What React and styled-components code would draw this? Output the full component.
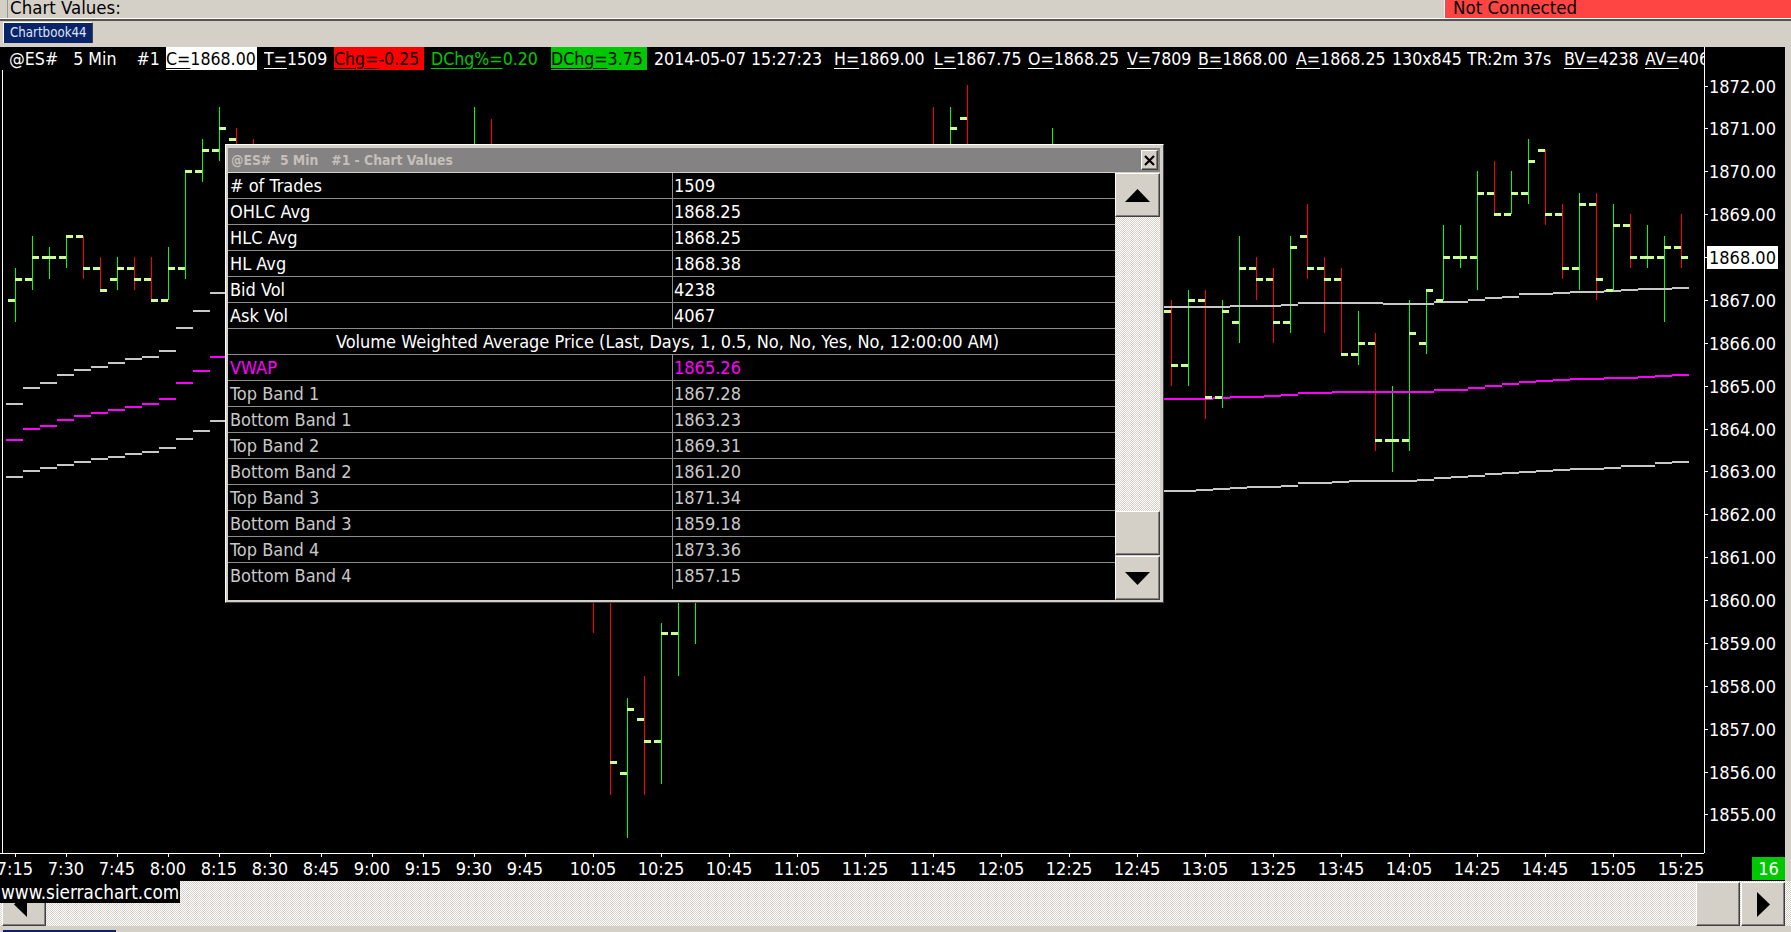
import React from 'react'
import styled, { createGlobalStyle } from 'styled-components'

const grey = '#d4d0c8'
const tickColor = '#c8ff96'

const GlobalStyle = createGlobalStyle`
  html, body { margin: 0; padding: 0; background: ${grey}; }
  body { font-family: "DejaVu Sans", "Liberation Sans", sans-serif; font-stretch: condensed; font-size: 18px; }
`

const Page = styled.div`
  width: 1791px;
  height: 932px;
  display: flex;
  flex-direction: column;
  overflow: hidden;
  background: ${grey};
  color: #fff;
`
const TopBar = styled.div`
  height: 18px;
  flex: none;
  display: flex;
  color: #000;
  font-size: 18.5px;
  line-height: 16px;
`
const ChartValues = styled.div`
  flex: 1;
  margin-left: 7px;
  padding-left: 2px;
  border-left: 1px solid #9a968e;
`
const Status = styled.div`
  width: 338px;
  padding-left: 8px;
  background: #ff4444;
  border-left: 1px solid #fff;
`
const Separator = styled.div`
  height: 3px;
  flex: none;
  box-sizing: border-box;
  border-top: 1px solid #fff;
  border-bottom: 2px solid #55534f;
`
const TabStrip = styled.div`
  height: 26px;
  flex: none;
  padding: 1px 0 0 3px;
  box-sizing: border-box;
`
const Tab = styled.div`
  width: 90px;
  height: 21px;
  box-sizing: border-box;
  background: #0a246a;
  border-top: 1px solid #fff;
  border-left: 1px solid #fff;
  border-right: 1px solid #404040;
  color: #dfe6f5;
  font-size: 13.2px;
  line-height: 19px;
  padding-left: 6px;
`
const ChartWindow = styled.div`
  position: relative;
  height: 834px;
  flex: none;
  margin-right: 6px;
  background: #000;
  display: grid;
  grid-template-columns: 1704px 81px;
  grid-template-rows: 23px 783px 28px;
`
const Header = styled.div`
  display: flex;
  overflow: hidden;
  padding-left: 9px;
  font-size: 17.6px;
  line-height: 25px;
  white-space: pre;
`
const Field = styled.div`
  flex: 0 0 ${p => p.$w}px;
  margin-right: ${p => p.$gap || 0}px;
  background: ${p => p.$bg || 'transparent'};
  color: ${p => p.$fg || '#fff'};
  overflow: hidden;
`
const Key = styled.span`
  text-decoration: underline;
  text-underline-offset: 3px;
`
const Plot = styled.svg`
  display: block;
  grid-column: 1;
  grid-row: 2;
  width: 1704px;
  height: 783px;
`
const PriceAxis = styled.div`
  grid-column: 2;
  grid-row: 1 / 3;
  border-left: 1px solid #fff;
  padding-top: 17.5px;
  display: flex;
  flex-direction: column;
`
const Price = styled.div`
  position: relative;
  height: 42.875px;
  flex: none;
  line-height: 44px;
  padding-left: 4px;
  &::before {
    content: '';
    position: absolute;
    left: 0;
    top: 21px;
    width: 3px;
    height: 1px;
    background: #fff;
  }
`
const LastPrice = styled.span`
  display: inline-block;
  margin-left: -2px;
  padding: 0 2px;
  height: 23px;
  line-height: 24px;
  background: #fff;
  color: #000;
`
const TimeAxis = styled.div`
  grid-column: 1;
  grid-row: 3;
  display: flex;
  padding-left: 15px;
  overflow: hidden;
  border-top: 1px solid #fff;
  line-height: 30px;
`
const TimeCell = styled.div`
  position: relative;
  flex: 0 0 ${p => p.$w}px;
  &::before {
    content: '';
    position: absolute;
    left: 0;
    top: 0;
    width: 1px;
    height: 3px;
    background: #fff;
  }
`
const TimeText = styled.span`
  display: inline-block;
  transform: translateX(-50%);
`
const Corner = styled.div`
  grid-column: 2;
  grid-row: 3;
  display: flex;
  justify-content: flex-end;
  padding-top: 4px;
`
const Counter = styled.div`
  width: 33px;
  height: 23px;
  background: #00c800;
  text-align: center;
  line-height: 24px;
`
const Credit = styled.div`
  position: absolute;
  left: 0;
  top: 834px;
  width: 180px;
  height: 22px;
  background: #000;
  font-size: 18.8px;
  line-height: 24px;
  padding-left: 1px;
  box-sizing: border-box;
  z-index: 2;
`
const ScrollRow = styled.div`
  height: 45px;
  flex: none;
  display: flex;
  justify-content: space-between;
  padding: 1px 6px 0 2px;
  box-sizing: border-box;
  background: repeating-conic-gradient(#d4d0c8 0 25%, #fff 0 50%) 0 0 / 2px 2px;
`
const BevelButton = styled.div`
  width: ${p => p.$w || 44}px;
  height: ${p => p.$h || 44}px;
  flex: none;
  box-sizing: border-box;
  background: ${grey};
  border-top: 1px solid #fff;
  border-left: 1px solid #fff;
  border-right: 1px solid #404040;
  border-bottom: 1px solid #404040;
  box-shadow: inset -1px -1px 0 #808080;
  display: flex;
  align-items: center;
  justify-content: center;
`
const LeftButton = styled(BevelButton)`
  padding-right: 7px;
`
const ButtonPair = styled.div`
  display: flex;
  gap: 1px;
`
const BottomStrip = styled.div`
  flex: 1;
  min-height: 0;
  box-sizing: border-box;
  padding: 4px 0 0 3px;
`
const BottomTab = styled.div`
  width: 113px;
  height: 2px;
  background: #0a246a;
`
const Dialog = styled.div`
  position: absolute;
  left: 225px;
  top: 97px;
  width: 939px;
  height: 459px;
  box-sizing: border-box;
  padding: 3px 3px 2px 2px;
  background: ${grey};
  border-top: 1px solid #fff;
  border-left: 1px solid #fff;
  border-right: 1px solid #404040;
  border-bottom: 1px solid #404040;
  display: flex;
  flex-direction: column;
  z-index: 1;
`
const TitleBar = styled.div`
  height: 24px;
  flex: none;
  background: #858284;
  color: #c4c0b8;
  font-family: "DejaVu Sans", sans-serif;
  font-size: 13.8px;
  font-weight: bold;
  line-height: 28px;
  padding: 0 2px 0 3px;
  white-space: pre;
  display: flex;
  justify-content: space-between;
  align-items: center;
  margin-bottom: 1px;
`
const CloseButton = styled(BevelButton)`
  width: 17px;
  height: 20px;
`
const DialogBody = styled.div`
  flex: 1;
  display: flex;
  min-height: 0;
`
const Table = styled.div`
  flex: 1;
  background: #000;
  display: flex;
  flex-direction: column;
`
const Row = styled.div`
  height: 26px;
  flex: none;
  box-sizing: border-box;
  display: ${p => (p.$wide ? 'block' : 'grid')};
  grid-template-columns: 444px 1fr;
  border-bottom: ${p => (p.$last ? 'none' : '1px solid #8c8c8c')};
  color: ${p => p.$color};
  text-align: ${p => (p.$wide ? 'center' : 'left')};
  line-height: 26px;
  padding-right: ${p => (p.$wide ? 8 : 0)}px;
`
const NameCell = styled.div`
  padding-left: 2px;
`
const ValueCell = styled.div`
  border-left: 1px solid #8c8c8c;
  padding-left: 1px;
`
const ScrollColumn = styled.div`
  width: 45px;
  display: flex;
  flex-direction: column;
`
const Track = styled.div`
  flex: 1;
  background: repeating-conic-gradient(#d4d0c8 0 25%, #fff 0 50%) 0 0 / 2px 2px;
`
const ScrollGap = styled.div`
  height: 1px;
  flex: none;
`

const headerFields = [
  { w: 157, text: '@ES#   5 Min    #1' },
  { w: 91, gap: 7, bg: '#fff', fg: '#000', key: 'C=', text: '1868.00' },
  { w: 64, gap: 6, key: 'T=', text: '1509' },
  { w: 90, gap: 7, bg: '#ff0000', fg: '#000', key: 'Chg=', text: '-0.25' },
  { w: 115, gap: 5, fg: '#00c800', key: 'DChg%=', text: '0.20' },
  { w: 96, gap: 7, bg: '#00c800', fg: '#000', key: 'DChg=', text: '3.75' },
  { w: 175, gap: 5, text: '2014-05-07 15:27:23' },
  { w: 93, gap: 7, key: 'H=', text: '1869.00' },
  { w: 88, gap: 6, key: 'L=', text: '1867.75' },
  { w: 93, gap: 6, key: 'O=', text: '1868.25' },
  { w: 65, gap: 6, key: 'V=', text: '7809' },
  { w: 91, gap: 7, key: 'B=', text: '1868.00' },
  { w: 89, gap: 7, key: 'A=', text: '1868.25' },
  { w: 69, gap: 6, text: '130x845' },
  { w: 90, gap: 7, text: 'TR:2m 37s' },
  { w: 75, gap: 6, key: 'BV=', text: '4238' },
  { w: 80, key: 'AV=', text: '4067' },
]

const prices = []
for (let p = 1872; p >= 1855; p--) prices.push(p)

const times = [
  ['7:15', 51], ['7:30', 51], ['7:45', 51], ['8:00', 51], ['8:15', 51], ['8:30', 51], ['8:45', 51],
  ['9:00', 51], ['9:15', 51], ['9:30', 51], ['9:45', 68], ['10:05', 68], ['10:25', 68], ['10:45', 68],
  ['11:05', 68], ['11:25', 68], ['11:45', 68], ['12:05', 68], ['12:25', 68], ['12:45', 68], ['13:05', 68],
  ['13:25', 68], ['13:45', 68], ['14:05', 68], ['14:25', 68], ['14:45', 68], ['15:05', 68], ['15:25', 24],
]

const rows = [
  ['# of Trades', '1509', '#fff'],
  ['OHLC Avg', '1868.25', '#fff'],
  ['HLC Avg', '1868.25', '#fff'],
  ['HL Avg', '1868.38', '#fff'],
  ['Bid Vol', '4238', '#fff'],
  ['Ask Vol', '4067', '#fff'],
  ['Volume Weighted Average Price (Last, Days, 1, 0.5, No, No, Yes, No, 12:00:00 AM)', null, '#fff'],
  ['VWAP', '1865.26', '#ff00ff'],
  ['Top Band 1', '1867.28', '#c8c8c8'],
  ['Bottom Band 1', '1863.23', '#c8c8c8'],
  ['Top Band 2', '1869.31', '#c8c8c8'],
  ['Bottom Band 2', '1861.20', '#c8c8c8'],
  ['Top Band 3', '1871.34', '#c8c8c8'],
  ['Bottom Band 3', '1859.18', '#c8c8c8'],
  ['Top Band 4', '1873.36', '#c8c8c8'],
  ['Bottom Band 4', '1857.15', '#c8c8c8'],
]

// x, high, low, open tick, close tick, colour
const bars = [
  [15, 268, 322, 300, 279, 'g'], [32, 236, 290, 279, 257, 'g'], [49, 247, 279, 257, 257, 'g'],
  [66, 236, 268, 257, 236, 'g'], [83, 236, 279, 236, 268, 'r'], [100, 257, 290, 268, 290, 'r'],
  [117, 257, 290, 279, 268, 'g'], [134, 257, 290, 268, 279, 'r'], [151, 257, 300, 279, 300, 'r'],
  [168, 247, 300, 300, 268, 'g'], [185, 171, 279, 268, 171, 'g'], [202, 139, 182, 171, 150, 'g'],
  [219, 107, 161, 150, 128, 'g'], [236, 128, 144, 139, null, 'r'], [253, 139, 144, null, null, 'r'],
  [474, 107, 144, null, null, 'g'], [491, 119, 144, null, null, 'r'],
  [593, 603, 633, null, null, 'r'], [610, 603, 795, null, 762, 'r'], [627, 698, 838, 773, 709, 'g'],
  [644, 676, 795, 719, 741, 'r'], [661, 623, 784, 741, 633, 'g'], [678, 603, 676, 633, null, 'g'],
  [695, 603, 644, null, null, 'g'],
  [933, 107, 144, null, null, 'r'], [950, 107, 144, null, 128, 'g'], [967, 85, 144, 118, null, 'r'],
  [1052, 128, 144, null, null, 'g'],
  [1171, 300, 386, 311, 365, 'r'], [1188, 290, 386, 365, 300, 'g'], [1205, 290, 419, 300, 397, 'r'],
  [1222, 300, 408, 397, 311, 'g'], [1239, 236, 343, 322, 268, 'g'], [1256, 257, 300, 268, 279, 'r'],
  [1273, 268, 343, 279, 322, 'r'], [1290, 236, 333, 322, 247, 'g'], [1307, 204, 279, 236, 268, 'r'],
  [1324, 257, 333, 268, 279, 'r'], [1341, 268, 354, 279, 354, 'r'], [1358, 311, 365, 354, 343, 'g'],
  [1375, 333, 451, 343, 440, 'r'], [1392, 386, 472, 440, 440, 'g'], [1409, 300, 451, 440, 333, 'g'],
  [1426, 289, 354, 343, 290, 'g'], [1443, 225, 300, 300, 257, 'g'], [1460, 225, 268, 257, 257, 'g'],
  [1477, 171, 290, 257, 193, 'g'], [1494, 161, 214, 193, 214, 'r'], [1511, 171, 214, 214, 193, 'g'],
  [1528, 139, 204, 193, 161, 'g'], [1545, 150, 225, 150, 214, 'r'], [1562, 204, 279, 214, 268, 'r'],
  [1579, 193, 290, 268, 204, 'g'], [1596, 193, 300, 204, 279, 'r'], [1613, 204, 290, 290, 225, 'g'],
  [1630, 214, 268, 225, 257, 'r'], [1647, 225, 268, 257, 257, 'g'], [1664, 236, 322, 257, 247, 'g'],
  [1681, 214, 268, 247, 257, 'r'],
]

const leftStep = ys => ys.map((y, i) => [i === 12 ? 225 : 23 + i * 17, y])

// each band: left run behind the dialog, then the right run as [end x, y]
const bands = [
  {
    color: '#c8c8c8',
    left: leftStep([404, 388, 383, 375, 370, 367, 363, 359, 357, 351, 328, 311, 293]),
    right: [[1230, 307], [1281, 306], [1298, 305], [1383, 303], [1434, 304], [1468, 302], [1485, 300], [1502, 298], [1519, 297], [1553, 294], [1570, 293], [1604, 292], [1621, 291], [1638, 290], [1672, 289], [1689, 288]],
  },
  {
    color: '#ff00ff',
    left: leftStep([440, 429, 426, 420, 416, 413, 410, 407, 404, 399, 383, 371, 357]),
    right: [[1213, 399], [1230, 398], [1264, 397], [1281, 396], [1298, 395], [1332, 393], [1434, 392], [1468, 390], [1485, 388], [1502, 386], [1519, 384], [1536, 382], [1553, 381], [1570, 380], [1604, 379], [1638, 378], [1655, 377], [1672, 376], [1689, 375]],
  },
  {
    color: '#c8c8c8',
    left: leftStep([477, 471, 468, 465, 462, 459, 457, 454, 452, 448, 439, 431, 421]),
    right: [[1196, 491], [1213, 490], [1230, 489], [1247, 488], [1281, 487], [1298, 486], [1332, 483], [1349, 482], [1417, 481], [1434, 480], [1451, 478], [1468, 477], [1485, 476], [1502, 474], [1519, 473], [1536, 472], [1553, 471], [1570, 470], [1604, 469], [1621, 468], [1655, 466], [1672, 463], [1689, 462]],
  },
]

function StepLine({ color, start, points }) {
  let x = start
  return points.map(([end, y]) => {
    const seg = <rect key={end} x={x} y={y - 1} width={end - x} height={2} fill={color} />
    x = end
    return seg
  })
}

function BarChart() {
  return (
    <Plot viewBox="0 70 1704 783" shapeRendering="crispEdges">
      <rect x="2" y="70" width="1" height="783" fill="#fff" />
      {bars.map(([x, hi, lo, , , c]) => (
        <rect key={x} x={x - 0.5} y={hi} width={1.4} height={lo - hi} fill={c === 'g' ? '#00ff00' : '#ff0000'} />
      ))}
      {bands.map((b, i) => (
        <g key={i}>
          <StepLine color={b.color} start={6} points={b.left} />
          <StepLine color={b.color} start={1164} points={b.right} />
        </g>
      ))}
      {bars.map(([x, , , open, close]) => (
        <g key={x} fill={tickColor}>
          {open !== null && <rect x={x - 7} y={open - 1} width={7} height={3} />}
          {close !== null && <rect x={x} y={close - 1} width={7} height={3} />}
        </g>
      ))}
    </Plot>
  )
}

const Triangle = ({ dir, w, h }) => {
  const shape = {
    up: `0,${h} ${w / 2},0 ${w},${h}`,
    down: `0,0 ${w},0 ${w / 2},${h}`,
    right: `0,0 ${w},${h / 2} 0,${h}`,
    left: `${w},0 0,${h / 2} ${w},${h}`,
  }
  return (
    <svg width={w} height={h}>
      <polygon points={shape[dir]} fill="#000" />
    </svg>
  )
}

export default function App() {
  return (
    <Page>
      <GlobalStyle />
      <TopBar>
        <ChartValues>Chart Values:</ChartValues>
        <Status>Not Connected</Status>
      </TopBar>
      <Separator />
      <TabStrip>
        <Tab>Chartbook44</Tab>
      </TabStrip>
      <ChartWindow>
        <Header>
          {headerFields.map((f, i) => (
            <Field key={i} $w={f.w} $gap={f.gap} $bg={f.bg} $fg={f.fg}>
              {f.key && <Key>{f.key}</Key>}
              {f.text}
            </Field>
          ))}
        </Header>
        <BarChart />
        <PriceAxis>
          {prices.map(p => (
            <Price key={p}>{p === 1868 ? <LastPrice>1868.00</LastPrice> : `${p}.00`}</Price>
          ))}
        </PriceAxis>
        <TimeAxis>
          {times.map(([t, w]) => (
            <TimeCell key={t} $w={w}>
              <TimeText>{t}</TimeText>
            </TimeCell>
          ))}
        </TimeAxis>
        <Corner>
          <Counter>16</Counter>
        </Corner>
        <Credit>www.sierrachart.com</Credit>
        <Dialog>
          <TitleBar>
            <span>@ES#  5 Min   #1 - Chart Values</span>
            <CloseButton>
              <svg width="11" height="11" viewBox="0 0 11 11">
                <path d="M1 1 L10 10 M10 1 L1 10" stroke="#000" strokeWidth="2.2" />
              </svg>
            </CloseButton>
          </TitleBar>
          <DialogBody>
            <Table>
              {rows.map(([name, value, color], i) =>
                value === null ? (
                  <Row key={i} $wide $color={color}>{name}</Row>
                ) : (
                  <Row key={i} $color={color} $last={i === rows.length - 1}>
                    <NameCell>{name}</NameCell>
                    <ValueCell>{value}</ValueCell>
                  </Row>
                )
              )}
            </Table>
            <ScrollColumn>
              <BevelButton $w={45}><Triangle dir="up" w={25} h={13} /></BevelButton>
              <Track />
              <BevelButton $w={45} />
              <ScrollGap />
              <BevelButton $w={45}><Triangle dir="down" w={25} h={13} /></BevelButton>
            </ScrollColumn>
          </DialogBody>
        </Dialog>
      </ChartWindow>
      <ScrollRow>
        <LeftButton><Triangle dir="left" w={13} h={25} /></LeftButton>
        <ButtonPair>
          <BevelButton />
          <BevelButton><Triangle dir="right" w={13} h={25} /></BevelButton>
        </ButtonPair>
      </ScrollRow>
      <BottomStrip>
        <BottomTab />
      </BottomStrip>
    </Page>
  )
}
